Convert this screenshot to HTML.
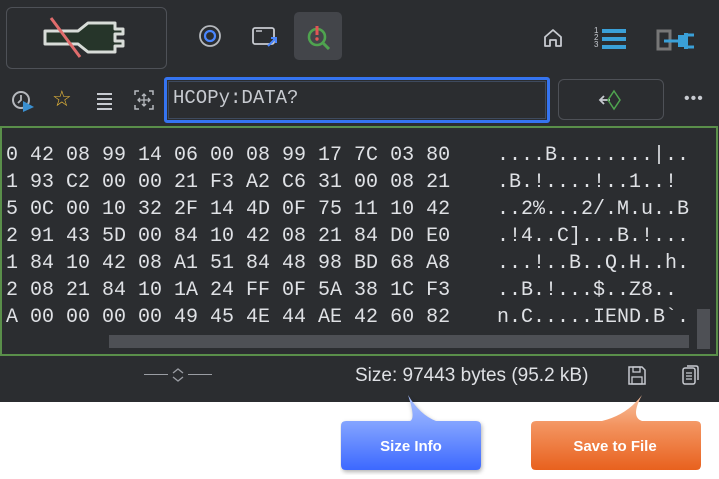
<!DOCTYPE html>
<html><head><meta charset="utf-8"><style>
*{margin:0;padding:0;box-sizing:border-box}
body{width:719px;height:479px;background:#fff;position:relative;overflow:hidden;font-family:"Liberation Sans",sans-serif}
.dark{position:absolute;left:0;top:0;width:719px;height:402px;background:#2b2d30}
.a{position:absolute}
.hex{position:absolute;left:0;top:126px;width:718px;height:230px;border:2px solid #5a8f4a;background:#2b2d30;overflow:hidden}
.rows{position:absolute;left:4px;top:14px;font-family:"Liberation Mono",monospace;font-size:20px;line-height:27px;color:#dfe1e5;white-space:pre}
.asc{left:495px}
</style></head><body>
<div class="dark"></div>
<div class="a" style="left:6px;top:7px;width:161px;height:62px;border:1.5px solid #4e5157;border-radius:6px"></div>
<svg class="a" style="left:40px;top:15px" width="90" height="46" viewBox="0 0 90 46">
<path d="M5 16 H38 L48 8 H75 V14 H83 V19 H75 V26 H83 V31 H75 V37 H48 L38 29 H5 Z" fill="#26352a" stroke="#d8dcd8" stroke-width="3" stroke-linejoin="round"/>
<line x1="11" y1="3" x2="40" y2="42" stroke="#e06c6c" stroke-width="3"/>
</svg>
<svg class="a" style="left:198px;top:24px" width="24" height="24"><circle cx="12" cy="12" r="10" fill="none" stroke="#b5b8bd" stroke-width="1.8"/><circle cx="12" cy="12" r="5" fill="none" stroke="#4a86ff" stroke-width="2.2"/></svg>
<svg class="a" style="left:252px;top:26px" width="28" height="24"><rect x="1" y="2" width="21" height="16" rx="2" fill="none" stroke="#c7cad0" stroke-width="1.8"/><line x1="4" y1="5" x2="10" y2="5" stroke="#c7cad0" stroke-width="1.5"/><path d="M16 20 L24 12 M19 12 H24 V17" stroke="#4a86ff" stroke-width="2" fill="none"/></svg>
<div class="a" style="left:294px;top:12px;width:48px;height:48px;background:#43454a;border-radius:5px"></div>
<svg class="a" style="left:306px;top:24px" width="26" height="26"><circle cx="11" cy="13" r="8" fill="none" stroke="#4fa34f" stroke-width="2.6"/><line x1="17" y1="19" x2="23" y2="25" stroke="#4fa34f" stroke-width="3"/><line x1="11" y1="2" x2="11" y2="11" stroke="#e05555" stroke-width="3"/><circle cx="11" cy="15" r="1.7" fill="#e05555"/></svg>
<svg class="a" style="left:542px;top:28px" width="22" height="20"><path d="M3 18 V9 L11 2 L19 9 V18 H14 V12 H8 V18 Z" fill="none" stroke="#c7cad0" stroke-width="1.8" stroke-linejoin="round"/></svg>
<div class="a" style="left:594px;top:27px;font-size:8px;line-height:7px;color:#c7cad0">1<br>2<br>3</div>
<div class="a" style="left:602px;top:29px;width:24px;height:4px;background:#3aa0d8;box-shadow:0 8px 0 #3aa0d8,0 16px 0 #3aa0d8"></div>
<svg class="a" style="left:656px;top:27px" width="44" height="24"><rect x="2" y="4" width="12" height="18" fill="none" stroke="#777" stroke-width="3"/><path d="M8 14 H22" stroke="#3aa0d8" stroke-width="3"/><path d="M22 8 H30 V20 H22 Z" fill="#3aa0d8"/><path d="M30 8 H38 M30 20 H38" stroke="#3aa0d8" stroke-width="3"/><rect x="28" y="6" width="4" height="16" fill="#3aa0d8"/></svg>
<svg class="a" style="left:10px;top:89px" width="26" height="24"><circle cx="11" cy="11" r="8" fill="none" stroke="#b5b8bd" stroke-width="2"/><path d="M11 6 V11 L8 14" stroke="#b5b8bd" stroke-width="1.8" fill="none"/><path d="M13 12 L24 18 L13 23 Z" fill="#3a8fd0"/></svg>
<div class="a" style="left:52px;top:86px;font-size:22px;color:#e8b83a">☆</div>
<div class="a" style="left:97px;top:93px;width:15px;height:2px;background:#c7cad0;box-shadow:0 5px 0 #c7cad0,0 10px 0 #c7cad0,0 15px 0 #c7cad0"></div>
<svg class="a" style="left:134px;top:90px" width="20" height="20"><path d="M1 5V1H5M15 1H19V5M19 15V19H15M5 19H1V15" stroke="#b5b8bd" stroke-width="1.5" fill="none"/><path d="M10 4V16M4 10H16M8 6L10 4 12 6M8 14L10 16 12 14M6 8L4 10 6 12M14 8L16 10 14 12" stroke="#b5b8bd" stroke-width="1.3" fill="none"/></svg>
<div class="a" style="left:164px;top:77px;width:386px;height:46px;border:3px solid #3574f0;border-radius:3px"><div style="position:absolute;inset:1px;border:1px solid #3e4a5e"></div></div>
<div class="a" style="left:173px;top:87px;font-family:'Liberation Mono',monospace;font-size:19px;color:#c7cad0">HCOPy:DATA?</div>
<div class="a" style="left:558px;top:79px;width:106px;height:41px;border:1.5px solid #4e5157;border-radius:6px"></div>
<svg class="a" style="left:598px;top:89px" width="26" height="22"><path d="M12 11 H2 M6 7 L2 11 L6 15" stroke="#c7cad0" stroke-width="1.8" fill="none"/><path d="M16 2 L22 11 L16 20 L10 11 Z" fill="none" stroke="#4fa34f" stroke-width="1.5"/></svg>
<div class="a" style="left:684px;top:90px;color:#c7cad0;font-size:16px;letter-spacing:1px">•••</div>
<div class="hex">
<div class="a" style="left:625px;top:-8px;color:#dfe1e5;font-family:'Liberation Mono',monospace;font-size:20px">˘</div>
<div class="rows">0 42 08 99 14 06 00 08 99 17 7C 03 80
1 93 C2 00 00 21 F3 A2 C6 31 00 08 21
5 0C 00 10 32 2F 14 4D 0F 75 11 10 42
2 91 43 5D 00 84 10 42 08 21 84 D0 E0
1 84 10 42 08 A1 51 84 48 98 BD 68 A8
2 08 21 84 10 1A 24 FF 0F 5A 38 1C F3
A 00 00 00 00 49 45 4E 44 AE 42 60 82</div>
<div class="rows asc">....B........|..
.B.!....!..1..!
..2%...2/.M.u..B
.!4..C]...B.!...
...!..B..Q.H..h.
..B.!...$..Z8..
n.C.....IEND.B`.</div>
<div class="a" style="left:107px;top:207px;width:580px;height:13px;background:#4e5055"></div>
<div class="a" style="left:695px;top:181px;width:13px;height:40px;background:#4e5055"></div>
</div>
<div class="a" style="left:144px;top:374px;width:24px;height:1px;background:#9a9da3"></div>
<div class="a" style="left:188px;top:374px;width:24px;height:1px;background:#9a9da3"></div>
<svg class="a" style="left:170px;top:367px" width="16" height="16"><path d="M3 6 L8 2 L13 6 M3 10 L8 14 L13 10" stroke="#9a9da3" stroke-width="1.3" fill="none"/></svg>
<div class="a" style="left:355px;top:365px;font-size:19px;color:#dfe1e5">Size: 97443 bytes (95.2 kB)</div>
<svg class="a" style="left:627px;top:365px" width="20" height="22"><path d="M2 2 H15 L18 5 V19 H2 Z" fill="none" stroke="#c7cad0" stroke-width="1.5"/><rect x="6" y="2" width="7" height="5" fill="none" stroke="#c7cad0" stroke-width="1.3"/><rect x="5" y="12" width="10" height="7" fill="none" stroke="#c7cad0" stroke-width="1.3"/></svg>
<svg class="a" style="left:681px;top:363px" width="20" height="24"><rect x="2" y="5" width="12" height="16" rx="2" fill="none" stroke="#c7cad0" stroke-width="1.5"/><path d="M6 3 H15 Q17 3 17 5 V17" fill="none" stroke="#c7cad0" stroke-width="1.5"/><path d="M5 10H11M5 13H11M5 16H11" stroke="#c7cad0" stroke-width="1.2"/></svg>
<svg class="a" style="left:340px;top:395px" width="370" height="80">
<defs><linearGradient id="b" x1="0" y1="0" x2="0" y2="1"><stop offset="0" stop-color="#a9c0ff"/><stop offset="0.4" stop-color="#7fa0ff"/><stop offset="1" stop-color="#3c68ff"/></linearGradient>
<linearGradient id="o" x1="0" y1="0" x2="0" y2="1"><stop offset="0" stop-color="#f8c2a0"/><stop offset="0.4" stop-color="#f39460"/><stop offset="1" stop-color="#e8611e"/></linearGradient></defs>
<path d="M4 26 H70 Q76 24 68 0 Q80 20 96 26 H136 Q141 26 141 31 V70 Q141 75 136 75 H6 Q1 75 1 70 V31 Q1 26 6 26 Z" fill="url(#b)" style="filter:drop-shadow(1px 2px 2px rgba(0,0,0,.3))"/>
<path d="M196 26 H262 Q287 20 302 0 Q290 22 302 26 H356 Q361 26 361 31 V70 Q361 75 356 75 H196 Q191 75 191 70 V31 Q191 26 196 26 Z" fill="url(#o)"/>
<text x="71" y="56" text-anchor="middle" font-family="Liberation Sans" font-weight="bold" font-size="15" fill="#fff">Size Info</text>
<text x="275" y="56" text-anchor="middle" font-family="Liberation Sans" font-weight="bold" font-size="15" fill="#fff">Save to File</text>
</svg>
</body></html>
